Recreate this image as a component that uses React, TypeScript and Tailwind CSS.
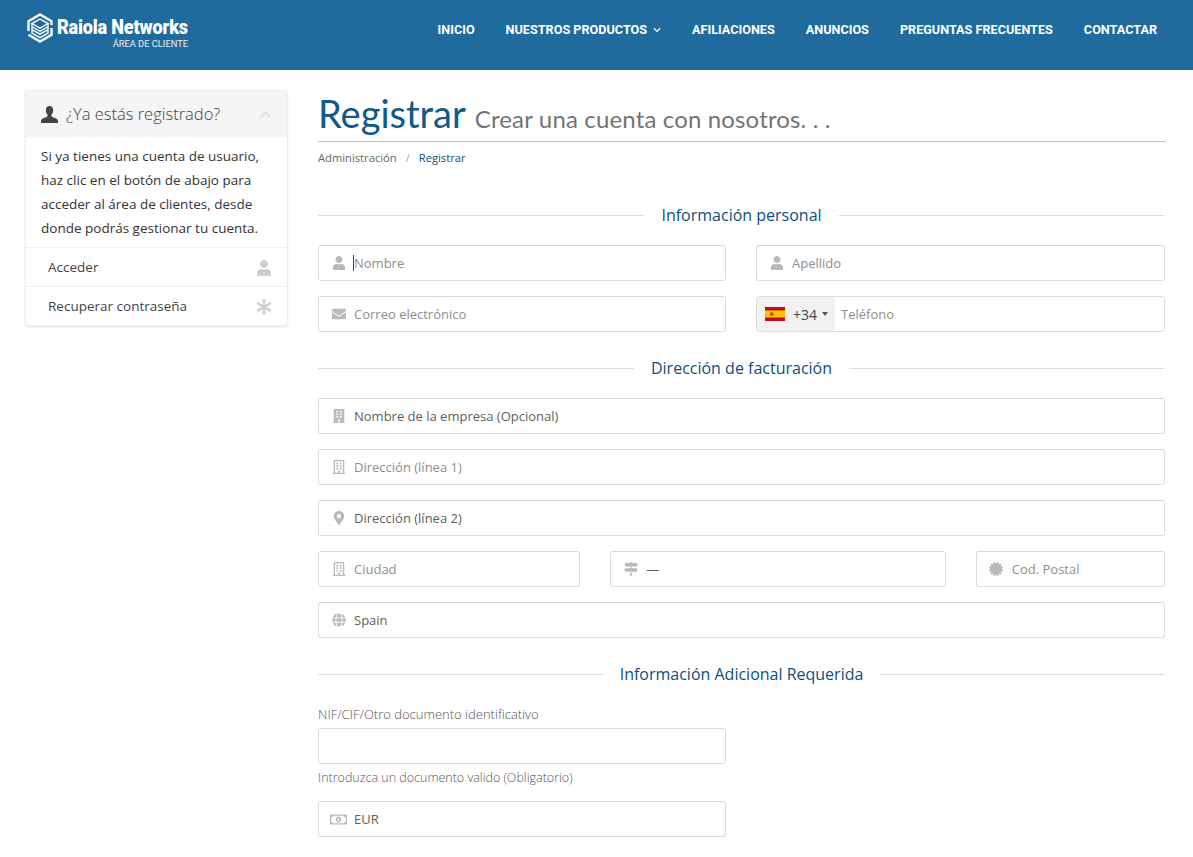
import type { ReactNode } from "react";
import {
  FaAsterisk,
  FaBuilding,
  FaCertificate,
  FaChevronDown,
  FaChevronUp,
  FaEnvelope,
  FaGlobe,
  FaMapMarkerAlt,
  FaMapSigns,
  FaRegBuilding,
  FaRegMoneyBillAlt,
  FaUser,
} from "react-icons/fa";

const navItems = ["INICIO", "NUESTROS PRODUCTOS", "AFILIACIONES", "ANUNCIOS", "PREGUNTAS FRECUENTES", "CONTACTAR"];

function Logo() {
  return (
    <div className="flex items-start gap-[4px]">
      <svg width="26" height="30" viewBox="0 0 26 30" fill="none" className="shrink-0">
        <path d="M1.500 18V8.200L13 1.500l11.500 6.700V12" stroke="#fff" strokeWidth="2.4" />
        <path d="M24.500 15v6.800L13 28.500 1.500 21.800" stroke="#fff" strokeWidth="2.4" />
        <path d="M13 6l8 4.600-8 4.600-8-4.600z" stroke="#fff" strokeWidth="1.4" />
        <path d="M5 10.600V20l8 4.600 8-4.600v-9.400" stroke="#fff" strokeWidth="1.4" />
        <path d="M5.500 14l7.500 4.300 7.500-4.300M5.500 16.800l7.500 4.300 7.500-4.300" stroke="#fff" strokeWidth="1.4" />
      </svg>
      <div className="mt-[3px] flex w-[131px] flex-col">
        <span className="origin-left font-['Roboto',sans-serif] text-[21px] leading-[22px] font-black tracking-[-0.2px] whitespace-nowrap text-white [transform:scaleX(0.86)]">
          Raiola Networks
        </span>
        <span className="self-end font-['Roboto',sans-serif] text-[9.3px] leading-[11px] whitespace-nowrap text-white/90">ÁREA DE CLIENTE</span>
      </div>
    </div>
  );
}

function Header() {
  return (
    <header className="flex h-[70px] justify-between bg-[#1f6b9e] pr-9 pl-[27px]">
      <div className="mt-[13px]">
        <Logo />
      </div>
      <nav className="mb-[9px] flex items-center gap-[31px] font-['Roboto',sans-serif] text-[12.65px] font-bold text-white">
        {navItems.map((item) => (
          <a key={item} className="flex items-center gap-[6px]">
            {item}
            {item === "NUESTROS PRODUCTOS" && <FaChevronDown className="h-[8px] w-[8px]" />}
          </a>
        ))}
      </nav>
    </header>
  );
}

function GlyphUser() {
  return (
    <svg width="17" height="17" viewBox="0 0 17 17" fill="#444" className="mr-[8px] shrink-0">
      <path d="M8.500 0C6 0 4.800 1.800 4.800 4c0 1.800.6 3.600 1.700 4.600v1.500C6.500 11.400 1 12 0 14.500V17h17v-2.500c-1-2.500-6.500-3.100-6.500-4.400V8.600C11.600 7.600 12.200 5.800 12.200 4 12.200 1.800 11 0 8.500 0z" />
    </svg>
  );
}

function Sidebar() {
  return (
    <aside className="w-[263px] shrink-0 self-start rounded-[3px] border border-[#eeeeee] bg-white shadow-[0_1px_2px_rgba(0,0,0,0.12)]">
      <div className="flex h-[46px] items-center bg-[#f5f5f5] px-[15px]">
        <GlyphUser />
        <span className="flex-1 text-[16.5px] font-light text-[#444]">¿Ya estás registrado?</span>
        <FaChevronUp className="h-[13px] w-[13px] text-[#e3e3e3]" />
      </div>
      <p className="px-[15px] py-[7px] text-[13.5px] leading-[24px] text-[#333]">
        Si ya tienes una cuenta de usuario, haz clic en el botón de abajo para acceder al área de clientes, desde donde podrás gestionar tu cuenta.
      </p>
      <div className="flex h-[39px] items-center justify-between border-t border-[#f1f1f1] pt-px pr-[15px] pl-[22px] text-[13.5px] text-[#444]">
        Acceder
        <FaUser className="h-[16px] w-[16px] text-[#cfcfcf]" />
      </div>
      <div className="flex h-[39px] items-center justify-between border-t border-[#f1f1f1] pt-px pr-[15px] pl-[22px] text-[13.5px] text-[#444]">
        Recuperar contraseña
        <FaAsterisk className="h-[16px] w-[16px] text-[#cfcfcf]" />
      </div>
    </aside>
  );
}

function SectionTitle({ children, className }: { children: ReactNode; className: string }) {
  return (
    <div className={`flex items-center gap-[17px] ${className}`}>
      <div className="h-px flex-1 bg-[#dddddd]" />
      <h3 className="text-[16px] leading-[22px] text-[#0b4f7d]">{children}</h3>
      <div className="h-px flex-1 bg-[#dddddd]" />
    </div>
  );
}

function Field({
  icon,
  placeholder,
  value,
  caret,
  className,
}: {
  icon?: ReactNode;
  placeholder?: string;
  value?: string;
  caret?: boolean;
  className?: string;
}) {
  return (
    <div className={`flex h-9 items-center rounded-[3px] border border-[#dddddd] border-t-[#d8d8d8] bg-white ${className ?? ""}`}>
      {icon && <span className="flex w-[34px] shrink-0 justify-center pl-[5px] text-[#b9b9b9]">{icon}</span>}
      {caret && <span className="h-[16px] w-px shrink-0 bg-[#444]" />}
      <input
        readOnly
        value={value ?? ""}
        placeholder={placeholder}
        className={`h-full w-full min-w-0 bg-transparent text-[13px] text-[#606060] outline-none placeholder:text-[#8e8e8e] ${caret ? "" : "pl-px"}`}
      />
    </div>
  );
}

function PhoneField() {
  return (
    <div className="flex h-9 items-center overflow-hidden rounded-[3px] border border-[#dddddd] bg-white">
      <div className="flex h-full w-[78px] shrink-0 items-center bg-[#f1f1f1] pl-2">
        <svg width="20" height="14" viewBox="0 0 20 14" className="shrink-0">
          <rect width="20" height="14" fill="#c60b1e" />
          <rect y="3.5" width="20" height="7" fill="#ffc400" />
          <rect x="5" y="5.2" width="3.5" height="3.6" rx="1" fill="#ad5b19" />
        </svg>
        <span className="ml-2 text-[14px] text-[#444]">+34</span>
        <span className="ml-[5px] h-0 w-0 border-x-[3px] border-t-[4px] border-x-transparent border-t-[#555]" />
      </div>
      <input
        readOnly
        placeholder="Teléfono"
        className="h-full w-full min-w-0 bg-transparent pl-[6px] text-[13px] outline-none placeholder:text-[#8e8e8e]"
      />
    </div>
  );
}

function RegisterForm() {
  const iconCls = "h-[14px] w-[14px]";

  return (
    <main className="min-w-0 flex-1">
      <div className="border-b border-[#bdbdbd] pt-[5px] pb-[4px]">
        <h1 className="font-['Lato',sans-serif] text-[38px] leading-[36px] text-[#10598a]">
          Registrar{" "}
          <small className="text-[24px] font-normal tracking-[0.15px] text-[#747474]">Crear una cuenta con nosotros. . .</small>
        </h1>
      </div>
      <div className="mt-[8px] flex text-[11.2px] leading-[15px]">
        <span className="text-[#666]">Administración</span>
        <span className="mx-[9px] text-[#aaa]">/</span>
        <span className="text-[#0b4f7d]">Registrar</span>
      </div>

      <SectionTitle className="mt-[39px]">Información personal</SectionTitle>
      <div className="mt-[19px] grid grid-cols-[408px_1fr] gap-x-[30px] gap-y-[15px]">
        <Field icon={<FaUser className={iconCls} />} placeholder="Nombre" caret />
        <Field icon={<FaUser className={iconCls} />} placeholder="Apellido" />
        <Field icon={<FaEnvelope className={iconCls} />} placeholder="Correo electrónico" />
        <PhoneField />
      </div>

      <SectionTitle className="mt-[25px]">Dirección de facturación</SectionTitle>
      <div className="mt-[19px] grid grid-cols-12 gap-x-[30px] gap-y-[15px]">
        <Field className="col-span-12" icon={<FaBuilding className={iconCls} />} value="Nombre de la empresa (Opcional)" />
        <Field className="col-span-12" icon={<FaRegBuilding className={iconCls} />} placeholder="Dirección (línea 1)" />
        <Field className="col-span-12" icon={<FaMapMarkerAlt className={iconCls} />} value="Dirección (línea 2)" />
        <Field className="col-span-4" icon={<FaRegBuilding className={iconCls} />} placeholder="Ciudad" />
        <Field className="col-span-5" icon={<FaMapSigns className={iconCls} />} value="—" />
        <Field className="col-span-3" icon={<FaCertificate className={iconCls} />} placeholder="Cod. Postal" />
        <Field className="col-span-12" icon={<FaGlobe className={iconCls} />} value="Spain" />
      </div>

      <SectionTitle className="mt-[25px]">Información Adicional Requerida</SectionTitle>
      <div className="grid grid-cols-[408px_1fr] gap-x-[30px]">
        <div>
          <label className="mt-[21px] block text-[13px] leading-[17px] font-light text-[#555]">NIF/CIF/Otro documento identificativo</label>
          <input readOnly className="mt-[5px] block h-9 w-full rounded-[3px] border border-[#dddddd] bg-white outline-none" />
          <p className="mt-[5px] text-[12.5px] leading-[17px] font-light text-[#555]">Introduzca un documento valido (Obligatorio)</p>
          <Field className="mt-[15px]" icon={<FaRegMoneyBillAlt className="h-[15px] w-[17px]" />} value="EUR" />
        </div>
      </div>
    </main>
  );
}

export default function App() {
  return (
    <div className="h-[857px] overflow-hidden bg-white font-['Open_Sans',sans-serif]">
      <Header />
      <div className="flex gap-[30px] pt-5 pr-7 pl-[25px]">
        <Sidebar />
        <RegisterForm />
      </div>
    </div>
  );
}
